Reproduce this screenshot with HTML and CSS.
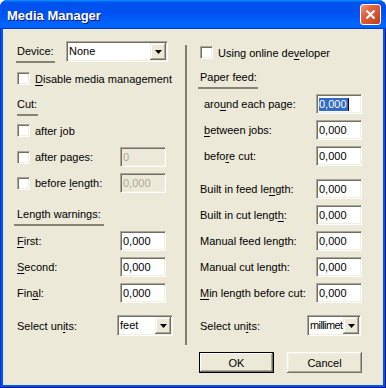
FILE: index.html
```html
<!DOCTYPE html>
<html lang="en">
  <head>
    <meta charset="UTF-8" />
    <title>Media Manager</title>
    <link rel="stylesheet" href="styles.css">
  </head>
  <body>
    <div class="window">
      <div class="titlebar">
        <span class="title">Media Manager</span>
        <span class="close">
          <svg width="13" height="13" viewBox="0 0 13 13">
            <path d="M2.5 2.5 L10.5 10.5 M10.5 2.5 L2.5 10.5" stroke="#fff" stroke-width="2.2" />
          </svg>
        </span>
      </div>

      <div class="client">
        <!-- Left side -->
        <div class="col col-left">
          <div class="line-device">
            <span class="caption cap-device">Device:</span>
            <div class="combo combo-device">
              <span class="combo-text">None</span>
              <span class="drop"><svg width="7" height="4" viewBox="0 0 7 4"><polygon points="0,0 7,0 3.5,4" fill="#000" /></svg></span>
            </div>
          </div>

          <div class="check check-disable"><span class="box"></span><span><u>D</u>isable media management</span></div>

          <div class="caption cap-cut">Cut:</div>

          <div class="check check-job"><span class="box"></span><span>after job</span></div>

          <div class="row row-pages">
            <div class="check"><span class="box"></span><span>after pages:</span></div>
            <span class="edit edit-off">0</span>
          </div>
          <div class="row">
            <div class="check"><span class="box"></span><span>before <u>l</u>ength:</span></div>
            <span class="edit edit-off">0,000</span>
          </div>

          <div class="caption cap-warn">Length warnings:</div>

          <div class="row row-first">
            <span><u>F</u>irst:</span>
            <span class="edit">0,000</span>
          </div>
          <div class="row">
            <span><u>S</u>econd:</span>
            <span class="edit">0,000</span>
          </div>
          <div class="row">
            <span>Fin<u>a</u>l:</span>
            <span class="edit">0,000</span>
          </div>

          <div class="row row-units">
            <span>Select un<u>i</u>ts:</span>
            <div class="combo combo-feet">
              <span class="combo-text">feet</span>
              <span class="drop"><svg width="7" height="4" viewBox="0 0 7 4"><polygon points="0,0 7,0 3.5,4" fill="#000" /></svg></span>
            </div>
          </div>
        </div>

        <div class="divider"></div>

        <!-- Right side -->
        <div class="col col-right">
          <div class="check"><span class="box"></span><span>Using online de<u>v</u>eloper</span></div>

          <div class="caption cap-paper">Paper feed:</div>

          <div class="row row-indent row-around">
            <span>aro<u>u</u>nd each page:</span>
            <span class="edit"><span class="sel">0,000</span></span>
          </div>
          <div class="row row-indent">
            <span><u>b</u>etween jobs:</span>
            <span class="edit">0,000</span>
          </div>
          <div class="row row-indent">
            <span>befo<u>r</u>e cut:</span>
            <span class="edit">0,000</span>
          </div>

          <div class="row row-built">
            <span>Built in feed le<u>n</u>gth:</span>
            <span class="edit">0,000</span>
          </div>
          <div class="row">
            <span>Built in cut lengt<u>h</u>:</span>
            <span class="edit">0,000</span>
          </div>
          <div class="row">
            <span>Manual feed length:</span>
            <span class="edit">0,000</span>
          </div>
          <div class="row">
            <span>Manual cut length:</span>
            <span class="edit">0,000</span>
          </div>
          <div class="row">
            <span><u>M</u>in length before cut:</span>
            <span class="edit">0,000</span>
          </div>

          <div class="row row-units">
            <span>Select un<u>i</u>ts:</span>
            <div class="combo combo-mm">
              <span class="combo-text">millimet</span>
              <span class="drop"><svg width="7" height="4" viewBox="0 0 7 4"><polygon points="0,0 7,0 3.5,4" fill="#000" /></svg></span>
            </div>
          </div>

          <div class="buttons">
            <button class="btn btn-default">OK</button>
            <button class="btn">Cancel</button>
          </div>
        </div>
      </div>
    </div>
  </body>
</html>
```

FILE: styles.css
```css
* {
  box-sizing: border-box;
}

body {
  margin: 0;
  background: #ffffff;
  font-family: "Liberation Sans", Arial, sans-serif;
  font-size: 11px;
  color: #000;
}

u {
  text-underline-offset: 2px;
}

.window {
  width: 386px;
  height: 388px;
  display: flex;
  flex-direction: column;
  background: #0055ea;
  border-radius: 8px 8px 0 0;
  box-shadow: inset 1px 0 #0831d9, inset -1px 0 #00138c, inset 0 -1px #00138c;
}

.titlebar {
  height: 29px;
  display: flex;
  align-items: center;
  padding: 0 5px 0 7px;
  border-radius: 7px 7px 0 0;
  background: linear-gradient(180deg, #0997ff, #0053ee 8%, #0050ee 40%, #0066ff 88%, #0066ff 93%, #005bff 95%, #003dd7 96%, #003dd7);
}

.title {
  flex: 1;
  color: #fff;
  font-weight: bold;
  font-size: 13px;
  text-shadow: 1px 1px #0a1883;
  padding-top: 1px;
}

.close {
  width: 21px;
  height: 21px;
  display: flex;
  align-items: center;
  justify-content: center;
  border: 1px solid #fff;
  border-radius: 3px;
  background: linear-gradient(135deg, #f09a7c 0%, #e2623f 35%, #d34e2a 70%, #b73a17 100%);
}

.client {
  flex: 1;
  margin: 0 3px 3px;
  padding-left: 14px;
  background: #ece9d8;
  display: flex;
  align-items: flex-start;
}

.col {
  display: flex;
  flex-direction: column;
}

.col-left {
  width: 156px;
  padding-top: 12px;
}

.col-right {
  width: 163px;
  padding-top: 17px;
}

.divider {
  width: 2px;
  height: 300px;
  margin: 16px 13px 0 12px;
  background: #7f7d70;
}

/* labels with the grey line under them */
.caption {
  align-self: flex-start;
  line-height: 13px;
  padding-bottom: 3px;
  border-bottom: 2px solid #858373;
}

.cap-device {
  width: 39px;
  margin: 4px 0 0 -1px;
  padding-left: 1px;
}

.cap-cut {
  width: 21px;
  margin-top: 13px;
}

.cap-warn {
  width: 90px;
  margin: 15px 0 0 -3px;
  padding-left: 3px;
}

.cap-paper {
  width: 60px;
  margin: 12px 0 0 -2px;
  padding-left: 2px;
}

/* checkboxes */
.check {
  display: flex;
  align-items: center;
  height: 13px;
  gap: 5px;
}

.box {
  width: 13px;
  height: 13px;
  background: #fff;
  border: 1px solid;
  border-color: #aca899 #fff #fff #aca899;
  box-shadow: inset 1px 1px #716f64, inset -1px -1px #f1efe2;
}

.check-disable {
  margin-top: 10px;
}

.check-job {
  margin-top: 8px;
}

/* rows with an edit field */
.row {
  display: flex;
  align-items: center;
  justify-content: space-between;
  height: 20px;
  margin-top: 6px;
}

.col-left .row .edit {
  margin-right: 7px;
}

.col-right .row .edit {
  margin-right: 1px;
}

.row-pages {
  margin-top: 10px;
}

.row-first {
  margin-top: 5px;
}

.row-around {
  margin-top: 5px;
}

.row-indent {
  padding-left: 4px;
}

.row-built {
  margin-top: 13px;
}

.row-units {
  height: 21px;
  margin-top: 12px;
}

.edit {
  width: 46px;
  height: 20px;
  padding: 0 2px;
  line-height: 18px;
  background: #fff;
  border: 1px solid;
  border-color: #aca899 #fff #fff #aca899;
  box-shadow: inset 1px 1px #716f64, inset -1px -1px #f1efe2;
  white-space: nowrap;
}

.edit-off {
  background: #ece9d8;
  color: #aca899;
}

.sel {
  display: inline-block;
  background: #316ac5;
  color: #fff;
  line-height: 13px;
  padding-right: 1px;
  border-right: 1px solid #000;
}

/* combo boxes */
.line-device {
  display: flex;
  align-items: flex-start;
  height: 21px;
}

.combo {
  height: 21px;
  display: flex;
  padding: 1px;
  background: #fff;
  border: 1px solid;
  border-color: #aca899 #fff #fff #aca899;
  box-shadow: inset 1px 1px #716f64, inset -1px -1px #f1efe2;
}

.combo-text {
  flex: 1;
  padding-left: 1px;
  line-height: 17px;
  overflow: hidden;
  white-space: nowrap;
}

.drop {
  width: 16px;
  height: 17px;
  display: flex;
  align-items: center;
  justify-content: center;
  background: #ece9d8;
  box-shadow: inset -1px -1px #716f64, inset 1px 1px #f1efe2, inset -2px -2px #aca899, inset 2px 2px #fff;
}

.combo-device {
  width: 102px;
  margin-left: 11px;
}

.combo-feet {
  width: 56px;
}

.combo-mm {
  width: 54px;
  margin-right: 2px;
}

.combo-mm .combo-text {
  letter-spacing: -0.6px;
}

/* buttons */
.buttons {
  display: flex;
  gap: 13px;
  margin: 16px 0 0 -1px;
}

.btn {
  width: 75px;
  height: 21px;
  padding: 0;
  border: none;
  font: inherit;
  color: #000;
  background: #ece9d8;
  box-shadow: inset -1px -1px #716f64, inset 1px 1px #fff, inset -2px -2px #aca899, inset 2px 2px #f1efe2;
}

.btn-default {
  box-shadow: inset 0 0 0 1px #000, inset -2px -2px #716f64, inset 2px 2px #fff, inset -3px -3px #aca899;
}
```
